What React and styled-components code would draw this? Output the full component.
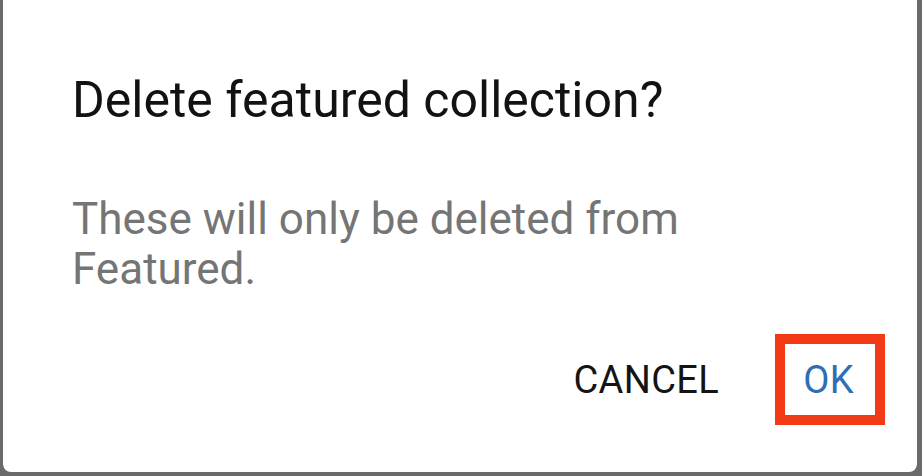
import React from "react";
import styled, { createGlobalStyle } from "styled-components";

const Global = createGlobalStyle`
  html, body { margin: 0; padding: 0; background: #6a6a6a; }
  body { font-family: Roboto, "Noto Sans", sans-serif; }
`;

const Screen = styled.div`
  width: 922px;
  height: 476px;
  box-sizing: border-box;
  padding: 0 5px 4px 3px;
  display: flex;
  background: #6a6a6a;
`;

const Dialog = styled.div`
  flex: 1;
  background: #ffffff;
  border-radius: 0 0 8px 8px;
  display: flex;
  flex-direction: column;
  padding: 72px 0 0 69px;
  box-sizing: border-box;
`;

const Title = styled.h1`
  margin: 0;
  font-family: Roboto, sans-serif;
  font-weight: 400;
  font-size: 50px;
  line-height: 56px;
  color: #121212;
  white-space: nowrap;
`;

const Message = styled.p`
  margin: 66px 0 0;
  font-family: Roboto, sans-serif;
  font-size: 44px;
  line-height: 50px;
  color: #757575;
  width: 660px;
`;

const Actions = styled.div`
  display: flex;
  justify-content: flex-end;
  align-items: center;
  margin-top: 40px;
  padding-right: 32px;
`;

const Button = styled.button`
  border: 10px solid ${(p) => (p.$highlight ? "#f23b16" : "transparent")};
  background: transparent;
  font-family: Roboto, sans-serif;
  font-size: 38px;
  font-weight: 400;
  letter-spacing: 0.4px;
  color: ${(p) => (p.$primary ? "#2f6db5" : "#141414")};
  height: 91px;
  padding: ${(p) => (p.$highlight ? "0 21px 0 18px" : "0 46px 0 10px")};
  box-sizing: border-box;
  display: flex;
  align-items: center;
  cursor: pointer;
`;

export default function App() {
  return (
    <>
      <Global />
      <Screen>
        <Dialog>
          <Title>Delete featured collection?</Title>
          <Message>These will only be deleted from Featured.</Message>
          <Actions>
            <Button>CANCEL</Button>
            <Button $primary $highlight>OK</Button>
          </Actions>
        </Dialog>
      </Screen>
    </>
  );
}
